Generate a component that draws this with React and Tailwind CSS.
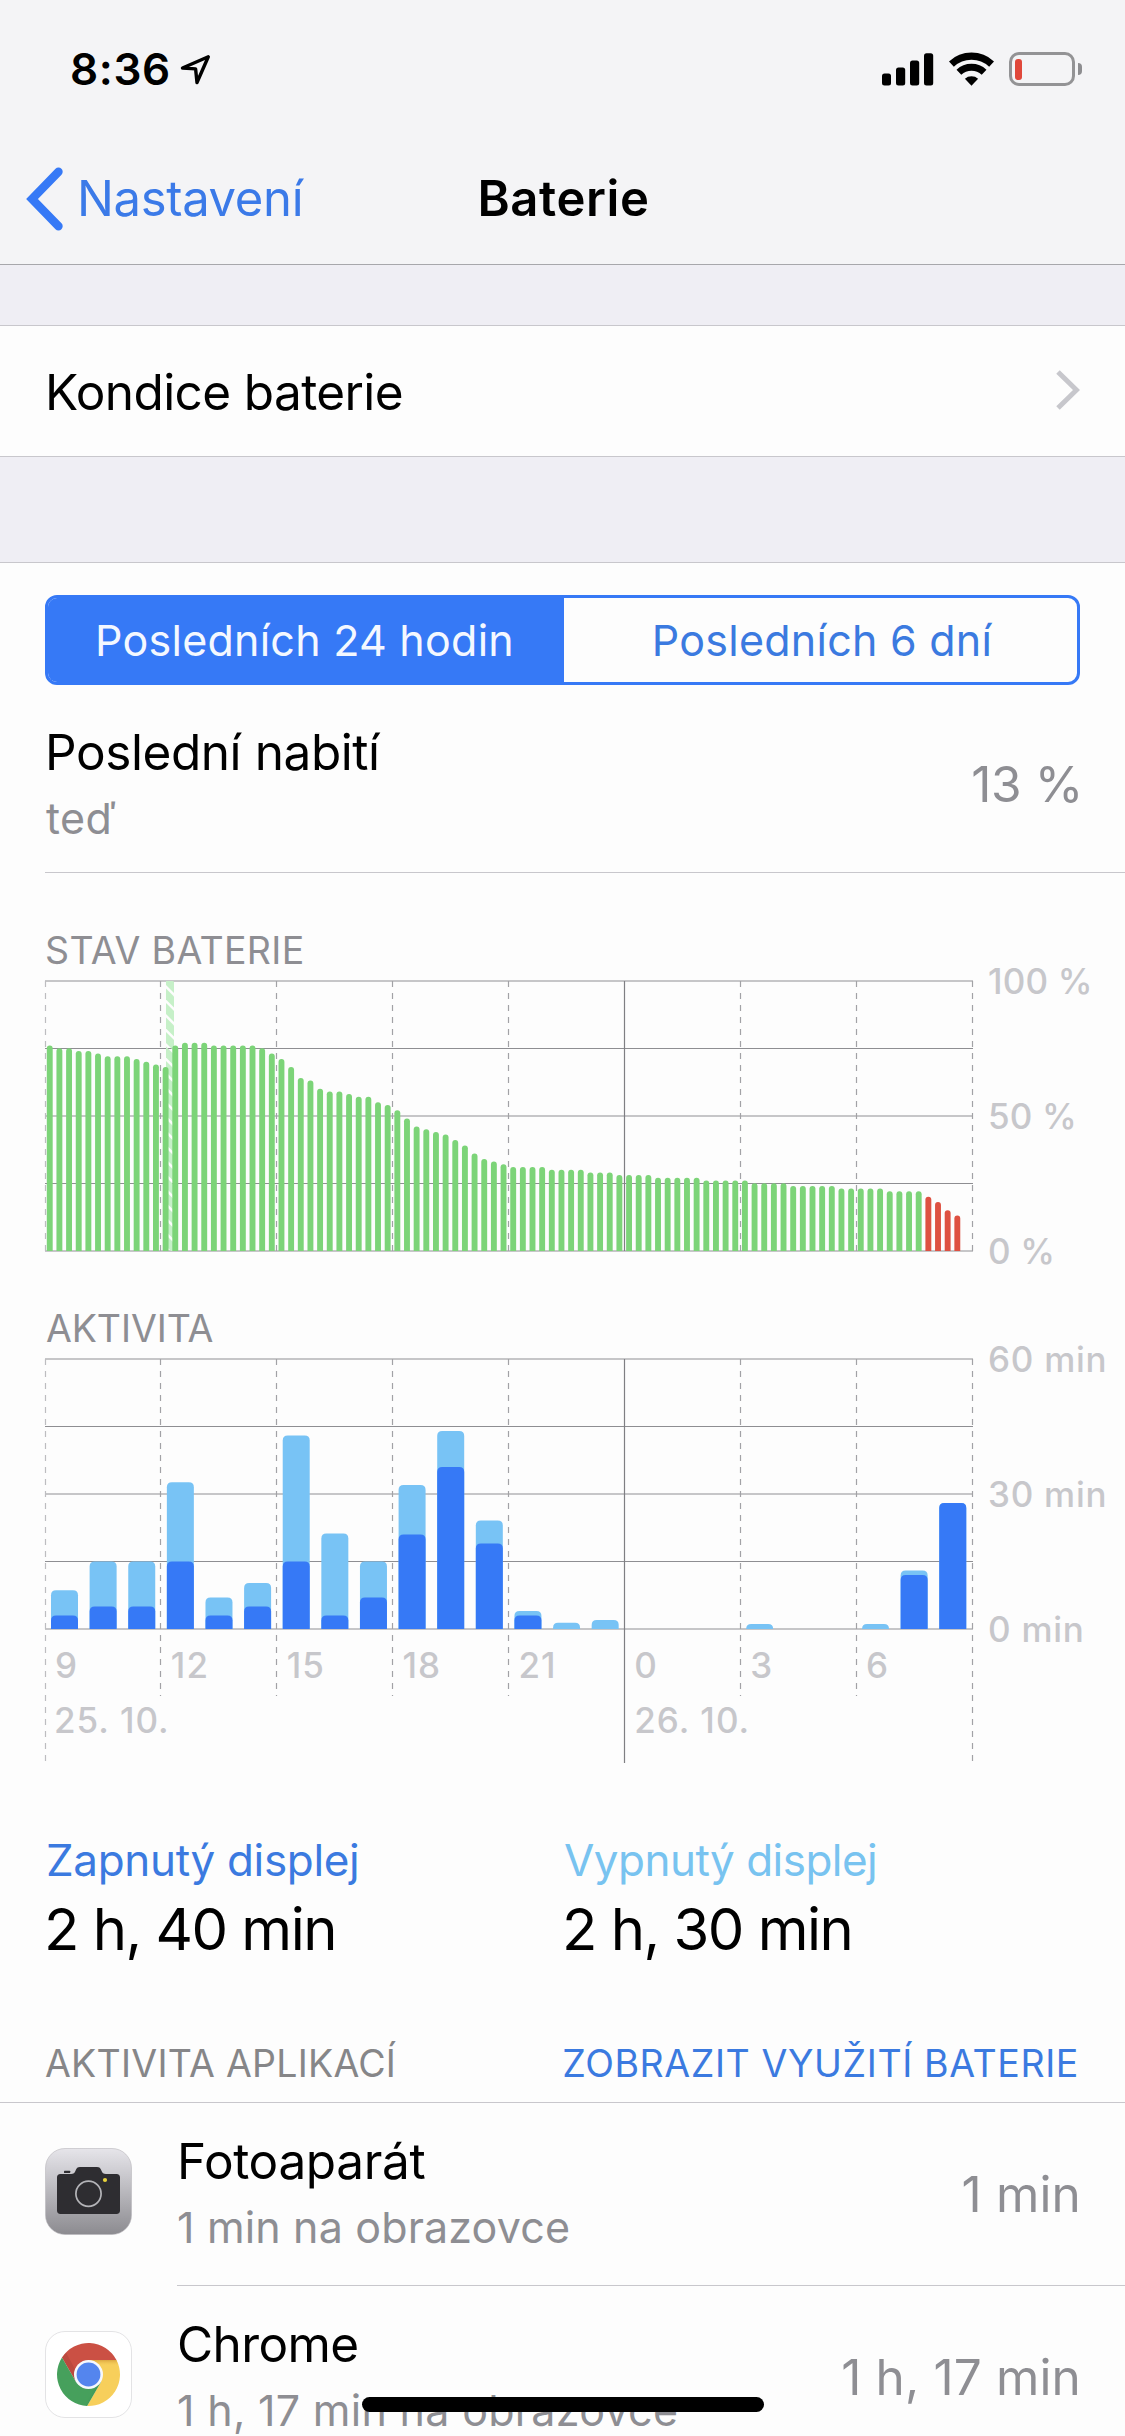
import React from "react";

const PLOT_W = 927;
const PLOT_H = 270;
const HOUR3 = 115.94;
const SLOT = 9.655;

const LEVELS = [
  76, 75, 75, 74, 74, 73, 72, 72, 72, 71, 70, 69, 68, 76, 77, 77, 77, 76, 76, 76, 76, 76, 75, 73,
  71, 68, 64, 63, 60, 59, 59, 58, 57, 57, 55, 54, 52, 49, 46, 45, 44, 43, 41, 39, 36, 34, 33, 32,
  31, 31, 31, 31, 30, 30, 30, 30, 29, 29, 29, 28, 28, 28, 28, 27, 27, 27, 27, 27, 26, 26, 26, 26,
  26, 25, 25, 25, 25, 24, 24, 24, 24, 24, 23, 23, 23, 23, 23, 22, 22, 22, 22, 20, 18, 15, 13,
];

// [total minutes, screen-on minutes] per hour
const ACTIVITY = [
  [8.6, 3], [15, 5], [15, 5], [32.6, 15], [7, 3], [10.2, 5], [43, 15], [21.2, 3],
  [15, 7], [32, 21], [44, 36], [24.1, 19], [4, 3], [1.4, 0], [2, 0], [0, 0],
  [0, 0], [0, 0], [1.1, 0], [0, 0], [0, 0], [1.1, 0], [13, 12], [28, 28],
];

const HOURS = ["9", "12", "15", "18", "21", "0", "3", "6"];

function topRounded(x, y, w, h, r) {
  const q = Math.min(r, h);
  return `M${x} ${y + h}V${y + q}Q${x} ${y} ${x + r} ${y}H${x + w - r}Q${x + w} ${y} ${x + w} ${y + q}V${y + h}Z`;
}

function GridLines({ extended }) {
  return (
    <g fill="none">
      {[0, 1, 2, 3, 4].map((i) => (
        <line
          key={i}
          x1="0"
          x2={PLOT_W + 1}
          y1={i * 67.5}
          y2={i * 67.5}
          stroke={i % 2 ? "#8e8e92" : "#c6c6c8"}
          strokeWidth={i % 2 ? 1 : 2}
        />
      ))}
      {[0, 1, 2, 3, 4, 5, 6, 7, 8].map((i) => {
        const x = Math.floor(i * HOUR3) + 0.5;
        const end = !extended ? PLOT_H : i === 0 || i === 5 || i === 8 ? 404 : 337;
        return (
          <line
            key={i}
            x1={x}
            x2={x}
            y1="0"
            y2={end}
            stroke={i === 5 ? "#7f7f83" : i === 0 ? "#bdbdc0" : "#a2a2a6"}
            strokeWidth="1.2"
            strokeDasharray={i === 5 ? undefined : "6 6"}
          />
        );
      })}
    </g>
  );
}

function BatteryPlot() {
  return (
    <svg width={PLOT_W} height={PLOT_H} className="block shrink-0 overflow-visible">
      <defs>
        <clipPath id="charge">
          <rect x="121" y="0" width="8" height={PLOT_H} />
        </clipPath>
      </defs>
      <GridLines />
      <g clipPath="url(#charge)" fill="#c6f0c8">
        {Array.from({ length: 20 }, (_, i) => (
          <path key={i} d={`M121 ${i * 14.5 - 7}l8 8v11l-8-8z`} />
        ))}
      </g>
      {LEVELS.map((v, i) => (
        <path
          key={i}
          d={topRounded(1.8 + i * SLOT, PLOT_H - v * 2.7 - 0.3, 5.9, v * 2.7 + 0.3, 2.9)}
          fill={v <= 20 ? "#de5142" : "#7cd478"}
        />
      ))}
    </svg>
  );
}

function ActivityPlot() {
  return (
    <svg width={PLOT_W} height="404" className="absolute top-0 left-0 overflow-visible">
      <GridLines extended />
      {ACTIVITY.map(([total, on], i) => {
        const x = 6 + i * 38.62;
        return (
          <g key={i}>
            {total > 0 && (
              <path d={topRounded(x, PLOT_H - total * 4.5, 27, total * 4.5, 5)} fill="#78c3f5" />
            )}
            {on > 0 && <path d={topRounded(x, PLOT_H - on * 4.5, 27, on * 4.5, 5)} fill="#3679f6" />}
          </g>
        );
      })}
    </svg>
  );
}

function Scale({ labels, className }) {
  return (
    <div
      className={`-my-5 ml-4 flex h-[310px] flex-col justify-between text-[35px] leading-[40px] font-medium whitespace-nowrap text-[#c7c7cb] ${className}`}
    >
      {labels.map((l) => (
        <span key={l}>{l}</span>
      ))}
    </div>
  );
}

function CameraIcon() {
  return (
    <svg width="87" height="87" viewBox="0 0 87 87" className="ml-[45px] block">
      <defs>
        <linearGradient id="cam" x1="0" y1="0" x2="0" y2="1">
          <stop offset="0" stopColor="#e6e5ea" />
          <stop offset="1" stopColor="#8c8b90" />
        </linearGradient>
      </defs>
      <rect x="0.5" y="0.5" width="86" height="86" rx="19.5" fill="url(#cam)" stroke="#b9b8bd" strokeOpacity="0.6" />
      <path
        d="M15.5 26H26c2.6 0 3.6-1 4.5-3.2C31.6 20 32.5 19 35 19h17c2.5 0 3.4 1 4.5 3.8C57.4 25 58.4 26 61 26h10.5c2.3 0 3.5 1.2 3.5 3.5v33c0 2.3-1.2 3.5-3.5 3.5h-56c-2.3 0-3.5-1.2-3.5-3.5v-33c0-2.3 1.2-3.5 3.5-3.5z"
        fill="#2e2d31"
      />
      <rect x="19" y="22.7" width="6.2" height="2.3" rx="0.6" fill="#2e2d31" />
      <circle cx="43.5" cy="45.7" r="12.6" fill="none" stroke="#b4b4b8" strokeWidth="1.7" />
      <circle cx="60" cy="32" r="2.1" fill="#e8d33c" />
    </svg>
  );
}

function ChromeIcon() {
  return (
    <svg width="87" height="87" viewBox="0 0 87 87" className="ml-[45px] block">
      <defs>
        <linearGradient id="shR" x1="0" y1="29" x2="0" y2="35" gradientUnits="userSpaceOnUse">
          <stop offset="0" stopColor="#c98a2e" stopOpacity="0.6" />
          <stop offset="1" stopColor="#f7cf5b" stopOpacity="0" />
        </linearGradient>
        <linearGradient id="shG" x1="56" y1="60" x2="48" y2="56" gradientUnits="userSpaceOnUse">
          <stop offset="0" stopColor="#1f6b3c" stopOpacity="0.7" />
          <stop offset="1" stopColor="#46a05c" stopOpacity="0" />
        </linearGradient>
      </defs>
      <rect x="0.5" y="0.5" width="86" height="86" rx="19.5" fill="#fff" stroke="#e3e3e5" />
      <path d="M16.97 26.54A31.5 31.5 0 0 1 71.46 29H43.5L30.94 50.75Z" fill="#cb5044" />
      <path d="M71.46 29A31.5 31.5 0 0 1 42.08 74.96L56.06 50.75L43.5 29Z" fill="#f7cf5b" />
      <path d="M42.08 74.96A31.5 31.5 0 0 1 16.97 26.54L30.94 50.75H56.06Z" fill="#46a05c" />
      <path d="M71.46 29H43.5L50 35H73.8Z" fill="url(#shR)" />
      <path d="M42.08 74.96L56.06 50.75L45 54L36 74Z" fill="url(#shG)" />
      <path d="M16.97 26.54L30.94 50.75L33 44L21 21.5Z" fill="#8f332a" opacity="0.25" />
      <circle cx="43.5" cy="43.5" r="14.5" fill="#f6f8fd" />
      <circle cx="43.5" cy="43.5" r="11.9" fill="#5485ee" />
    </svg>
  );
}

function AppRow({ icon, name, nameClass, detail, detailClass, value, last }) {
  return (
    <div className="flex h-[183px] shrink-0">
      <div className="flex w-[177px] shrink-0 items-center pb-[6px]">{icon}</div>
      <div
        className={`flex flex-1 items-center justify-between border-b pr-[44px] ${last ? "border-transparent" : "border-[#c8c7cc]"}`}
      >
        <div className="flex flex-col gap-[10px] pb-[5px] whitespace-nowrap">
          <div className={`text-[49.5px] leading-[60px] text-black ${nameClass}`}>{name}</div>
          <div className={`text-[43px] leading-[52px] text-[#8e8e93] ${detailClass}`}>{detail}</div>
        </div>
        <div className="pb-px text-[49.5px] leading-[60px] tracking-[0.15px] whitespace-nowrap text-[#8e8e93]">
          {value}
        </div>
      </div>
    </div>
  );
}

function StatusBar() {
  return (
    <div className="flex h-[138px] items-center justify-between pr-[43px] pl-[70px]">
      <div className="flex items-center">
        <span className="w-[110px] text-[44px] leading-[54px] font-semibold tracking-[0.6px]">8:36</span>
        <svg width="31" height="31" viewBox="0 0 31 31">
          <path
            d="M28.3 2.8L2.5 14L15.6 14.9L17 28.5Z"
            fill="none"
            stroke="#000"
            strokeWidth="3.4"
            strokeLinejoin="round"
          />
        </svg>
      </div>
      <div className="flex items-center">
        <svg width="52" height="34" viewBox="0 0 52 34">
          <rect x="0" y="21.5" width="9" height="12" rx="2.5" />
          <rect x="14" y="15.5" width="9.2" height="18" rx="2.5" />
          <rect x="28" y="8.5" width="9.2" height="25" rx="2.5" />
          <rect x="42" y="1.3" width="9.2" height="32.2" rx="2.5" />
        </svg>
        <svg width="45" height="34" viewBox="0 0 45 34" className="ml-[15px]">
          <path d="M2.4 12.1A29.5 29.5 0 0 1 42.6 12.1" fill="none" stroke="#000" strokeWidth="7.2" />
          <path d="M9.9 20.2A18.5 18.5 0 0 1 35.1 20.2" fill="none" stroke="#000" strokeWidth="7" />
          <path d="M22.5 33.7L15.9 26.8A10 10 0 0 1 29.1 26.8Z" />
        </svg>
        <div className="ml-[15px] flex h-[34px] w-[66px] items-center rounded-[10px] border-3 border-[#939395] pl-[3px]">
          <div className="h-[21px] w-[7px] rounded-[3px] bg-[#e0483b]" />
        </div>
        <div className="ml-[3px] h-[12px] w-[4px] rounded-r-full bg-[#8d8d90]" />
      </div>
    </div>
  );
}

export default function App() {
  return (
    <div className="relative flex h-[2436px] w-[1125px] flex-col overflow-hidden bg-[#fdfdfd] font-['Inter','Liberation_Sans',sans-serif] text-black">
      <header className="h-[265px] shrink-0 border-b border-[#a7a7ab] bg-[#f4f4f6]">
        <StatusBar />
        <div className="grid h-[126px] grid-cols-[1fr_auto_1fr] items-center pb-[5px]">
          <div className="flex items-center text-[49px] leading-[60px] tracking-[-0.35px] text-[#3b7ae8]">
            <svg width="37" height="64" viewBox="0 0 37 64" className="ml-[26px]">
              <path
                d="M32.5 4.7L6 32L32.5 59.3"
                fill="none"
                stroke="#3679f6"
                strokeWidth="8.4"
                strokeLinecap="round"
                strokeLinejoin="miter"
              />
            </svg>
            <span className="ml-[14px]">Nastavení</span>
          </div>
          <h1 className="pl-[2px] text-[49px] leading-[60px] font-semibold tracking-[0.6px]">Baterie</h1>
          <div />
        </div>
      </header>

      <div className="h-[60px] shrink-0 bg-[#efeef4]" />

      <div className="flex h-[132px] shrink-0 items-center justify-between border-y border-[#c8c7cc] pr-[45px] pl-[45px]">
        <span className="pt-px text-[49.5px] leading-[60px] tracking-[-0.6px]">Kondice baterie</span>
        <svg width="24" height="40" viewBox="0 0 24 40" className="mb-[3px]">
          <path d="M2 2L20.5 20L2 38" fill="none" stroke="#c7c7cc" strokeWidth="5" />
        </svg>
      </div>

      <div className="h-[106px] shrink-0 border-b border-[#c8c7cc] bg-[#efeef4]" />

      <div className="mx-[45px] mt-[32px] grid h-[90px] shrink-0 grid-cols-[516px_1fr] overflow-hidden rounded-[12px] border-3 border-[#3679f6] text-[43px] leading-[52px] tracking-[0.25px]">
        <div className="flex items-center justify-center bg-[#3679f6] pr-[3px] text-[#f4f8ff]">Posledních 24 hodin</div>
        <div className="flex items-center justify-center pl-[3px] text-[#3b7ae0]">Posledních 6 dní</div>
      </div>

      <div className="ml-[45px] flex h-[188px] shrink-0 items-start justify-between border-b border-[#c8c7cc] pt-[37px] pr-[44px]">
        <div className="flex flex-col gap-[10px]">
          <div className="text-[49.5px] leading-[60px] tracking-[-0.42px]">Poslední nabití</div>
          <div className="pl-px text-[43px] leading-[52px] tracking-[0.34px] text-[#8e8e93]">teď</div>
        </div>
        <div className="mt-[32px] -mr-[2px] text-[49.5px] leading-[60px] tracking-[-0.4px] text-[#8e8e93]">13 %</div>
      </div>

      <h2 className="mt-[55px] ml-[45px] shrink-0 text-[37.5px] leading-[46px] tracking-[0.34px] text-[#8e8e93]">
        STAV BATERIE
      </h2>
      <div className="mt-[7px] ml-[45px] flex h-[270px] shrink-0">
        <BatteryPlot />
        <Scale labels={["100 %", "50 %", "0 %"]} className="tracking-[0.15px]" />
      </div>

      <h2 className="mt-[55px] ml-[46px] shrink-0 text-[37.5px] leading-[46px] tracking-[-0.1px] text-[#8e8e93]">
        AKTIVITA
      </h2>
      <div className="relative mt-[7px] ml-[45px] h-[404px] shrink-0">
        <ActivityPlot />
        <div className="flex h-[270px]">
          <div className="w-[927px] shrink-0" />
          <Scale labels={["60 min", "30 min", "0 min"]} className="tracking-[0.75px]" />
        </div>
        <div className="mt-[16px] flex text-[35px] leading-[40px] font-medium tracking-[1px] text-[#c7c7cb]">
          {HOURS.map((h) => (
            <span key={h} className="w-[115.86px] shrink-0 pl-[10px]">
              {h}
            </span>
          ))}
        </div>
        <div className="mt-[15px] flex text-[35px] leading-[40px] font-medium tracking-[1px] text-[#c7c7cb]">
          <span className="w-[579.3px] shrink-0 pl-[9px]">25. 10.</span>
          <span className="pl-[10px]">26. 10.</span>
        </div>
      </div>

      <div className="mt-[70px] ml-[46px] grid shrink-0 grid-cols-[517px_1fr] text-[44px] leading-[54px]">
        <div className="tracking-[-0.34px] text-[#3b7ae0]">Zapnutý displej</div>
        <div className="pl-px tracking-[-0.53px] text-[#78c3f0]">Vypnutý displej</div>
        <div className="mt-[7px] -ml-[2px] text-[58px] leading-[70px] tracking-[-1.5px] text-black">2 h, 40 min</div>
        <div className="mt-[7px] -ml-px text-[58px] leading-[70px] tracking-[-1.5px] text-black">2 h, 30 min</div>
      </div>

      <div className="mt-[77px] flex h-[62px] shrink-0 justify-between border-b border-[#c8c7cc] pr-[46px] pl-[45px] text-[37.5px] leading-[46px]">
        <h2 className="tracking-[0.24px] text-[#868688]">AKTIVITA APLIKACÍ</h2>
        <span className="tracking-[0.6px] text-[#3b7ae0]">ZOBRAZIT VYUŽITÍ BATERIE</span>
      </div>

      <AppRow
        icon={<CameraIcon />}
        name="Fotoaparát"
        nameClass="tracking-[-0.36px]"
        detail="1 min na obrazovce"
        detailClass="tracking-[0.16px]"
        value="1 min"
      />
      <AppRow
        icon={<ChromeIcon />}
        name="Chrome"
        nameClass="tracking-[-0.6px]"
        detail="1 h, 17 min na obrazovce"
        detailClass="tracking-[0.3px]"
        value="1 h, 17 min"
        last
      />

      <div className="absolute bottom-[24px] left-[362px] h-[15px] w-[402px] rounded-full bg-black" />
    </div>
  );
}
